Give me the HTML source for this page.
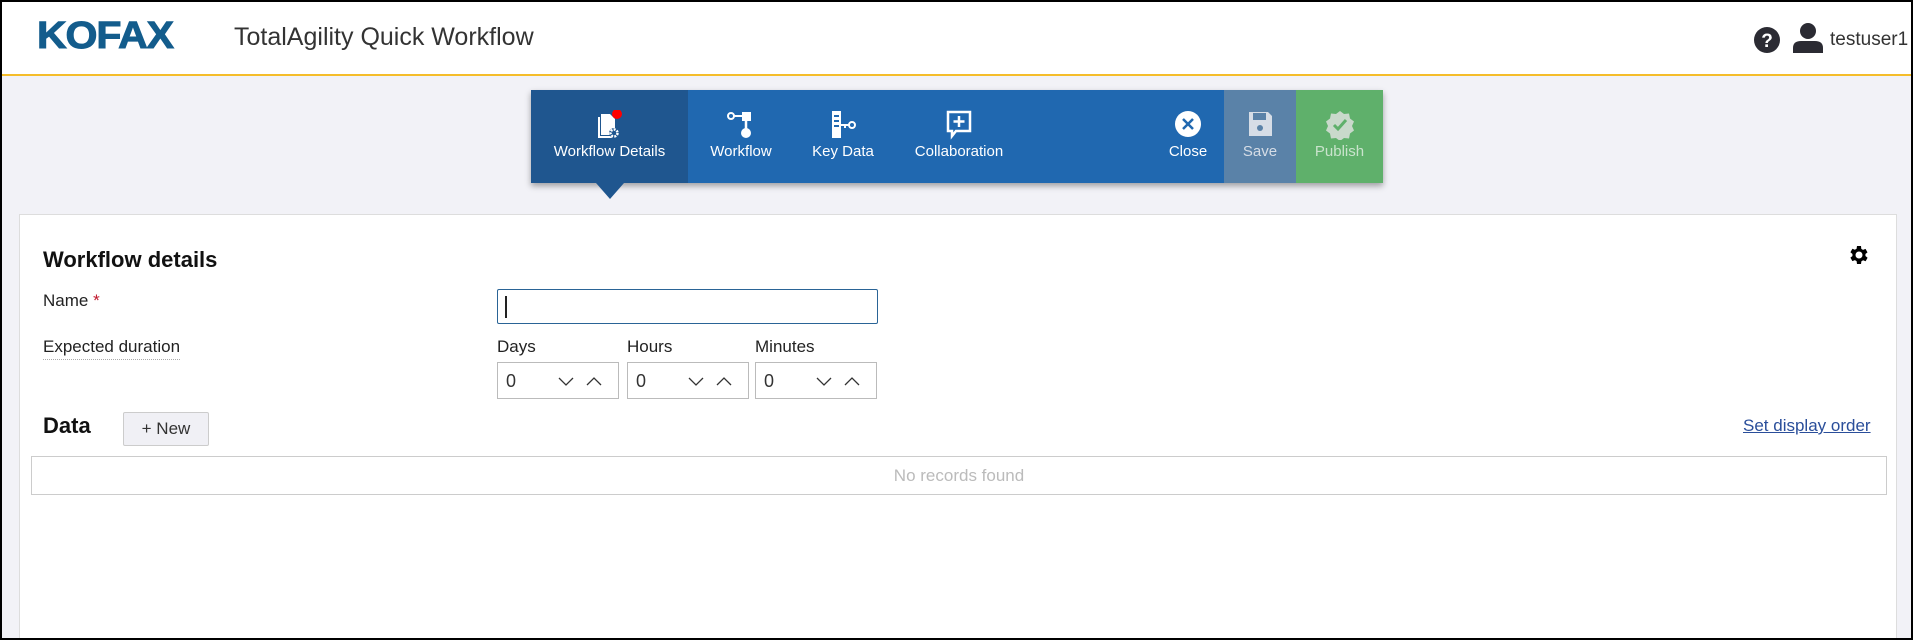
<!DOCTYPE html>
<html><head><meta charset="utf-8"><style>
*{box-sizing:border-box;margin:0;padding:0}
html,body{width:1913px;height:640px;overflow:hidden}
#w{position:relative;width:1913px;height:640px;overflow:hidden;background:#f2f2f7;font-family:"Liberation Sans",sans-serif;border:2px solid #000}
.a{position:absolute}
#hdr{left:0;top:0;width:1909px;height:74px;background:#fff;border-bottom:2px solid #f5bd2a}
.tb{top:88px;height:93px;box-shadow:0 3px 6px rgba(0,0,0,.35)}
.lbl{position:absolute;top:53px;width:100%;text-align:center;color:#fff;font-size:15px}
.ic{position:absolute;top:20px;left:50%;transform:translateX(-50%)}
.t{color:#222;font-size:17px}
.sp{top:360px;width:122px;height:37px;border:1px solid #bbb;background:#fff}
.sp span{position:absolute;left:8px;top:8px;font-size:18px;color:#333}
.sp svg{position:absolute;top:12px}
</style></head><body><div id="w">
<div id="hdr" class="a">
 <div class="a" style="left:35px;top:13px;font-size:38px;font-weight:bold;color:#135c8c;letter-spacing:-1px;transform:scaleX(1.08);transform-origin:left;-webkit-text-stroke:1px #135c8c">KOFAX</div>
 <div class="a" style="left:232px;top:21px;font-size:25px;color:#333">TotalAgility Quick Workflow</div>
 <svg class="a" style="left:1752px;top:25px" width="26" height="26" viewBox="0 0 26 26"><circle cx="13" cy="13" r="13" fill="#2b2b33"/><text x="13" y="20" text-anchor="middle" font-family="Liberation Sans" font-weight="bold" font-size="19" fill="#fff">?</text></svg>
 <svg class="a" style="left:1790px;top:20px" width="32" height="32" viewBox="0 0 32 32"><circle cx="16" cy="9" r="8" fill="#2b2b33"/><path d="M1 31 V26 Q1 19 9 19 H23 Q31 19 31 26 V31 Z" fill="#2b2b33"/></svg>
 <div class="a" style="left:1828px;top:27px;font-size:19px;color:#333">testuser1</div>
</div>
<div class="a tb" style="left:529px;width:852px;background:#2068b0"></div>
<div class="a tb" style="left:529px;width:157px;background:#1f568f;box-shadow:none">
 <svg class="ic" width="30" height="32" viewBox="0 0 30 32"><path d="M6 4h9l5 5v16H6z" fill="#fff"/><path d="M4 7v20h13" stroke="#fff" stroke-width="2" fill="none"/><circle cx="19" cy="23" r="5" fill="#1f568f"/><circle cx="19" cy="23" r="3.5" fill="none" stroke="#fff" stroke-width="2.5" stroke-dasharray="2 1.2"/><circle cx="22" cy="4" r="5" fill="#f00"/></svg>
 <div class="lbl">Workflow Details</div>
</div>
<div class="a" style="left:594px;top:181px;width:0;height:0;border-left:14px solid transparent;border-right:14px solid transparent;border-top:16px solid #1f568f"></div>
<div class="a tb" style="left:686px;width:106px;box-shadow:none">
 <svg class="ic" width="30" height="30" viewBox="0 0 30 30"><circle cx="5" cy="6" r="3" fill="none" stroke="#fff" stroke-width="2"/><path d="M8 6h8" stroke="#fff" stroke-width="2"/><rect x="16" y="2" width="9" height="9" fill="#fff"/><path d="M20 11v8" stroke="#fff" stroke-width="2.5"/><circle cx="20" cy="23" r="5" fill="#fff"/></svg>
 <div class="lbl">Workflow</div>
</div>
<div class="a tb" style="left:792px;width:98px;box-shadow:none">
 <svg class="ic" width="30" height="30" viewBox="0 0 30 30"><rect x="4" y="1" width="9" height="27" fill="#fff"/><path d="M6 6h5M6 11h5M6 16h5" stroke="#2068b0" stroke-width="2"/><path d="M13 15h8" stroke="#fff" stroke-width="2"/><circle cx="24" cy="15" r="3" fill="none" stroke="#fff" stroke-width="2"/><path d="M17 15v3" stroke="#fff" stroke-width="2"/></svg>
 <div class="lbl">Key Data</div>
</div>
<div class="a tb" style="left:890px;width:134px;box-shadow:none">
 <svg class="ic" width="30" height="30" viewBox="0 0 30 30"><path d="M4 2h22v19H12l-4 5v-5H4z" fill="none" stroke="#fff" stroke-width="2.5"/><path d="M15 6v11M9.5 11.5h11" stroke="#fff" stroke-width="2.5"/></svg>
 <div class="lbl">Collaboration</div>
</div>
<div class="a tb" style="left:1150px;width:72px;box-shadow:none">
 <svg class="ic" width="28" height="28" viewBox="0 0 28 28"><circle cx="14" cy="14" r="13" fill="#fff"/><path d="M9 9l10 10M19 9L9 19" stroke="#2068b0" stroke-width="2.5"/></svg>
 <div class="lbl">Close</div>
</div>
<div class="a tb" style="left:1222px;width:72px;background:#5a82a8;box-shadow:none">
 <svg class="ic" width="28" height="28" viewBox="0 0 28 28"><path d="M3 2h19l4 4v20H3z" fill="#d6dde6"/><rect x="7" y="3" width="13" height="7" fill="#5a82a8"/><circle cx="14" cy="18" r="3" fill="#5a82a8"/></svg>
 <div class="lbl" style="color:#d6dde6">Save</div>
</div>
<div class="a tb" style="left:1294px;width:87px;background:#5fb06b;box-shadow:none">
 <svg class="ic" width="30" height="30" viewBox="0 0 30 30"><path d="M15 1l4 3 5-.5 1 5 4 3-2 4.5 2 4.5-4 3-1 5-5-.5-4 3-4-3-5 .5-1-5-4-3 2-4.5-2-4.5 4-3 1-5 5 .5z" fill="#c9d9cb"/><path d="M9 15l4 4 8-9" stroke="#5fb06b" stroke-width="3" fill="none"/></svg>
 <div class="lbl" style="color:#c9e3cc">Publish</div>
</div>
<div class="a" style="left:17px;top:212px;width:1878px;height:440px;background:#fff;border:1px solid #ddd"></div>
<div class="a" style="left:41px;top:245px;font-size:22px;font-weight:bold;color:#111">Workflow details</div>
<svg class="a" style="left:1845px;top:241px" width="24" height="24" viewBox="0 0 24 24"><path fill="#000" d="M19.4 13a7.5 7.5 0 000-2l2.1-1.6-2-3.5-2.5 1a7 7 0 00-1.7-1L15 3h-4l-.4 2.7a7 7 0 00-1.7 1l-2.5-1-2 3.5L6.5 11a7.5 7.5 0 000 2l-2.1 1.6 2 3.5 2.5-1a7 7 0 001.7 1L11 21h4l.4-2.7a7 7 0 001.7-1l2.5 1 2-3.5zM13 15.5a3.5 3.5 0 110-7 3.5 3.5 0 010 7z" transform="translate(-1 0)"/></svg>
<div class="a t" style="left:41px;top:289px">Name <span style="color:#c0162b">*</span></div>
<div class="a" style="left:495px;top:287px;width:381px;height:35px;border:1.5px solid #2a6496;border-radius:2px;background:#fff"><div class="a" style="left:7px;top:6px;width:2px;height:22px;background:#222"></div></div>
<div class="a t" style="left:41px;top:335px;border-bottom:1px dotted #aaa;padding-bottom:2px">Expected duration</div>
<div class="a t" style="left:495px;top:335px">Days</div>
<div class="a t" style="left:625px;top:335px">Hours</div>
<div class="a t" style="left:753px;top:335px">Minutes</div>
<div class="a sp" style="left:495px"><span>0</span><svg style="left:60px" width="60" height="14" viewBox="0 0 60 14"><path d="M1 3l7 7 7-7M29 10l7-7 7 7" stroke="#333" stroke-width="1.3" fill="none"/></svg></div>
<div class="a sp" style="left:625px"><span>0</span><svg style="left:60px" width="60" height="14" viewBox="0 0 60 14"><path d="M1 3l7 7 7-7M29 10l7-7 7 7" stroke="#333" stroke-width="1.3" fill="none"/></svg></div>
<div class="a sp" style="left:753px"><span>0</span><svg style="left:60px" width="60" height="14" viewBox="0 0 60 14"><path d="M1 3l7 7 7-7M29 10l7-7 7 7" stroke="#333" stroke-width="1.3" fill="none"/></svg></div>
<div class="a" style="left:41px;top:411px;font-size:22px;font-weight:bold;color:#111">Data</div>
<div class="a" style="left:121px;top:410px;width:86px;height:34px;background:#f0f0f5;border:1px solid #ccc;border-radius:2px;font-size:17px;color:#333;text-align:center;line-height:32px">+ New</div>
<div class="a" style="left:1741px;top:414px;font-size:17px;color:#2a4e9a;text-decoration:underline">Set display order</div>
<div class="a" style="left:29px;top:454px;width:1856px;height:39px;border:1px solid #ccc;text-align:center;line-height:37px;font-size:17px;color:#bbb">No records found</div>
</div></body></html>
